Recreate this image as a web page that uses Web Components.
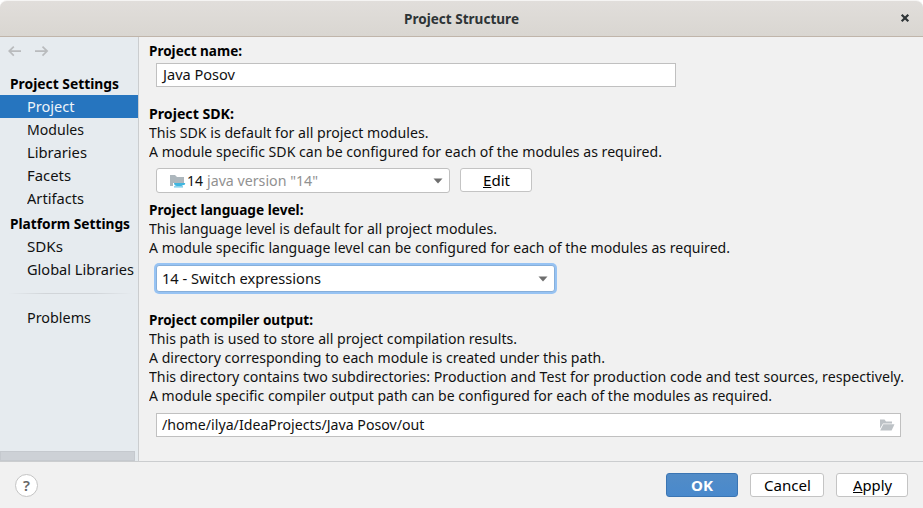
<!DOCTYPE html>
<html lang="en"><head><meta charset="utf-8"><title>Project Structure</title>
<style>
body{margin:0;font:15px/19px "Noto Sans",sans-serif;color:#111;background:#f1f1f1}
</style></head><body>
<project-dialog></project-dialog>
<script>
const define=(name,html,init)=>customElements.define(name,class extends HTMLElement{
  constructor(){super();const t=document.createElement('template');t.innerHTML=html;
    this.attachShadow({mode:'open'}).append(t.content.cloneNode(true));}
  connectedCallback(){if(init)init(this,this.shadowRoot);}
});

/* A single line of text condensed or widened to the width given in "w". */
define('text-line',`<style>
:host{display:block;white-space:nowrap;height:19px;line-height:19px;text-align:left}
:host([bold]){font-weight:700;color:#000}
span{display:inline-block;transform-origin:0 50%;white-space:pre}
</style><span><slot></slot></span>`,(el,root)=>{
  const w=+el.getAttribute('w');el.style.width=w+'px';
  const s=root.querySelector('span'),n=s.offsetWidth&&s.getBoundingClientRect().width;
  if(n)s.style.transform='scaleX('+(w/n)+')';
});

define('title-bar',`<style>
:host{display:flex;box-sizing:border-box;height:37px;align-items:center;justify-content:center;padding:0 0 1px;
border-top:1px solid #f5f4f3;border-bottom:1px solid #c0b5aa;background:linear-gradient(#e1dedb,#d9d6d1);border-radius:7px 7px 0 0;position:relative}
::slotted(text-line){color:#2e3436!important}
svg{position:absolute;left:900px;top:12px}
</style><slot></slot><svg width="10" height="10" viewBox="0 0 10 10"><path d="M1.700 1.700 8.300 8.300M8.300 1.700 1.700 8.300" stroke="#2e3436" stroke-width="2.200"/></svg>`);

define('nav-arrows',`<style>:host{display:flex;padding:8px 0 0 8px;height:28px}svg{display:block}</style>
<svg width="42" height="13" viewBox="0 0 42 13" fill="none" stroke="#b9bbbd" stroke-width="1.7"><path d="M13 6.1H1.3M5.8 1.6 1.2 6.1 5.8 10.6M27 6.1H39M34.5 1.6 39.1 6.1 34.5 10.6"/></svg>`);

define('nav-item',`<style>
:host{display:flex;align-items:center;height:23px;padding-left:27px}
:host([selected]){background:#2675bf;color:#eef4fa}
</style><slot></slot>`);

define('nav-title',`<style>:host{display:flex;align-items:center;height:21px;padding:0 0 1px 10px}</style><slot></slot>`);

define('side-nav',`<style>
:host{display:flex;flex-direction:column;box-sizing:border-box;width:139px;background:#e6ebef;border-right:1px solid #cbcdcf}
hr{margin:12px 5px 12px 8px;border:0;height:1px;background:linear-gradient(90deg,#d1d5d900,#d1d5d9 30%,#d1d5d9 70%,#d1d5d900)}
.g{margin-top:3px}
.bar{margin-top:auto;box-sizing:border-box;width:135px;height:10px;background:#cdd1d6;border:1px solid #c5c9ce}
</style>
<nav-arrows></nav-arrows>
<nav-title><text-line bold w="109">Project Settings</text-line></nav-title>
<nav-item selected><text-line w="47.5">Project</text-line></nav-item>
<nav-item><text-line w="57">Modules</text-line></nav-item>
<nav-item><text-line w="60">Libraries</text-line></nav-item>
<nav-item><text-line w="44">Facets</text-line></nav-item>
<nav-item><text-line w="57">Artifacts</text-line></nav-item>
<nav-title class="g"><text-line bold w="120">Platform Settings</text-line></nav-title>
<nav-item><text-line w="36">SDKs</text-line></nav-item>
<nav-item><text-line w="107">Global Libraries</text-line></nav-item>
<hr>
<nav-item><text-line w="64">Problems</text-line></nav-item>
<div class="bar"></div>`);

define('text-field',`<style>
:host{display:flex;box-sizing:border-box;align-items:center;justify-content:space-between;height:24px;border:1px solid #c0c0c0;background:#fff;padding:0 5px 1px}
</style><slot></slot>`);

define('combo-box',`<style>
:host{display:flex;box-sizing:border-box;align-items:center;height:25px;border:1px solid #c0c0c0;border-radius:3px;background:#fff;padding:0 6px 0 5px}
:host([focused]){border-color:#87afda;box-shadow:0 0 0 2px #97c3f3;height:27px}
.arrow{margin-left:auto}
</style><slot></slot><svg class="arrow" width="10" height="6" viewBox="0 0 10 6"><path d="M.5.5h9L5 5.5z" fill="#6e6e6e"/></svg>`);

define('push-button',`<style>
:host{display:flex;box-sizing:border-box;align-items:center;justify-content:center;width:72px;height:24px;border:1px solid #c4c4c4;border-radius:3px;background:#fff;color:#000}
:host([primary]){background:linear-gradient(#528cc7,#4989cc);border-color:#3b75b3;color:#fff}
:host([primary]) ::slotted(text-line){color:#fff}
</style><slot></slot>`);

define('sdk-icon',`<style>:host{display:block;width:17px;height:17px}svg{display:block}</style>
<svg width="17" height="17" viewBox="0 0 17 17"><path d="M1 3h5l2 2h7v6H4v3H1z" fill="#adb7bd"/><path d="M5 11h10.500c.7 0 .8.500.6 1-.3.800-1.100 1.200-2.300 1.200-.5.500-1 .8-1.600.8H7.800C6.300 14 5 13 5 11z" fill="#40b6e0"/><path d="M5 14.900h9" stroke="#40b6e0"/></svg>`);

define('folder-icon',`<style>:host{display:block;width:16px;height:12px}svg{display:block}</style>
<svg width="16" height="12" viewBox="0 0 16 12"><path d="M1 .5h4.500L7 2.500h6V4.500H4L1 9.500z" fill="#bdc2c6"/><path d="M4.300 5.300H15.500L12.600 11.500H1.200z" fill="#bdc2c6"/></svg>`);

define('help-button',`<style>:host{display:flex;box-sizing:border-box;align-items:center;justify-content:center;width:23px;height:23px;margin-top:1px;border:1px solid #c4c4c4;border-radius:50%;background:#fff;color:#666;font:600 15px/19px "Noto Sans",sans-serif}</style><slot></slot>`);

define('settings-form',`<style>
:host{display:flex;flex-direction:column;box-sizing:border-box;width:784px;padding:4px 0 0 10px}
text-field,combo-box{margin-left:7px}
.name{width:520px;margin-top:3px;margin-bottom:17px;padding-left:6px}
.row{display:flex;gap:10px;margin:7px 0 7px}
.sdk{width:294px;padding-left:12px}
.sdk .v{margin-left:1px}.sdk .d{margin-left:4px;color:#919191}
.level{width:399px;margin:8px 0 18px 7px}
.out{width:745px;margin-top:8px}
u{text-underline-offset:1px;text-decoration-thickness:1px}
</style>
<text-line bold w="93">Project name:</text-line>
<text-field class="name"><text-line w="72">Java Posov</text-line></text-field>
<text-line bold w="85">Project SDK:</text-line>
<text-line w="279.5">This SDK is default for all project modules.</text-line>
<text-line w="513">A module specific SDK can be configured for each of the modules as required.</text-line>
<div class="row"><combo-box class="sdk"><sdk-icon></sdk-icon><text-line class="v" w="16">14</text-line><text-line class="d" w="111">java version "14"</text-line></combo-box>
<push-button><text-line w="27"><u>E</u>dit</text-line></push-button></div>
<text-line bold w="154.5">Project language level:</text-line>
<text-line w="348">This language level is default for all project modules.</text-line>
<text-line w="581">A module specific language level can be configured for each of the modules as required.</text-line>
<combo-box class="level" focused><text-line w="159">14 - Switch expressions</text-line></combo-box>
<text-line bold w="164">Project compiler output:</text-line>
<text-line w="368">This path is used to store all project compilation results.</text-line>
<text-line w="456">A directory corresponding to each module is created under this path.</text-line>
<text-line w="755">This directory contains two subdirectories: Production and Test for production code and test sources, respectively.</text-line>
<text-line w="623">A module specific compiler output path can be configured for each of the modules as required.</text-line>
<text-field class="out"><text-line w="262.5">/home/ilya/IdeaProjects/Java Posov/out</text-line><folder-icon></folder-icon></text-field>`);

define('dialog-footer',`<style>
:host{display:flex;box-sizing:border-box;height:47px;border-top:1px solid #cbcdcf;padding:11px 15px 0;gap:12px;align-items:flex-start}
help-button{margin-right:auto}
.cancel{width:74px}
u{text-underline-offset:1px;text-decoration-thickness:1px}
</style><help-button>?</help-button>
<push-button primary><text-line bold w="22">OK</text-line></push-button>
<push-button class="cancel"><text-line w="47">Cancel</text-line></push-button>
<push-button><text-line w="39"><u>A</u>pply</text-line></push-button>`);

define('project-dialog',`<style>
:host{display:flex;flex-direction:column;width:923px;height:508px;background:#f1f1f1;overflow:hidden}
.top{background:#fff}
main{display:flex;height:424px}
</style>
<div class="top"><title-bar><text-line bold w="115">Project Structure</text-line></title-bar></div>
<main><side-nav></side-nav><settings-form></settings-form></main>
<dialog-footer></dialog-footer>`);
</script></body></html>
